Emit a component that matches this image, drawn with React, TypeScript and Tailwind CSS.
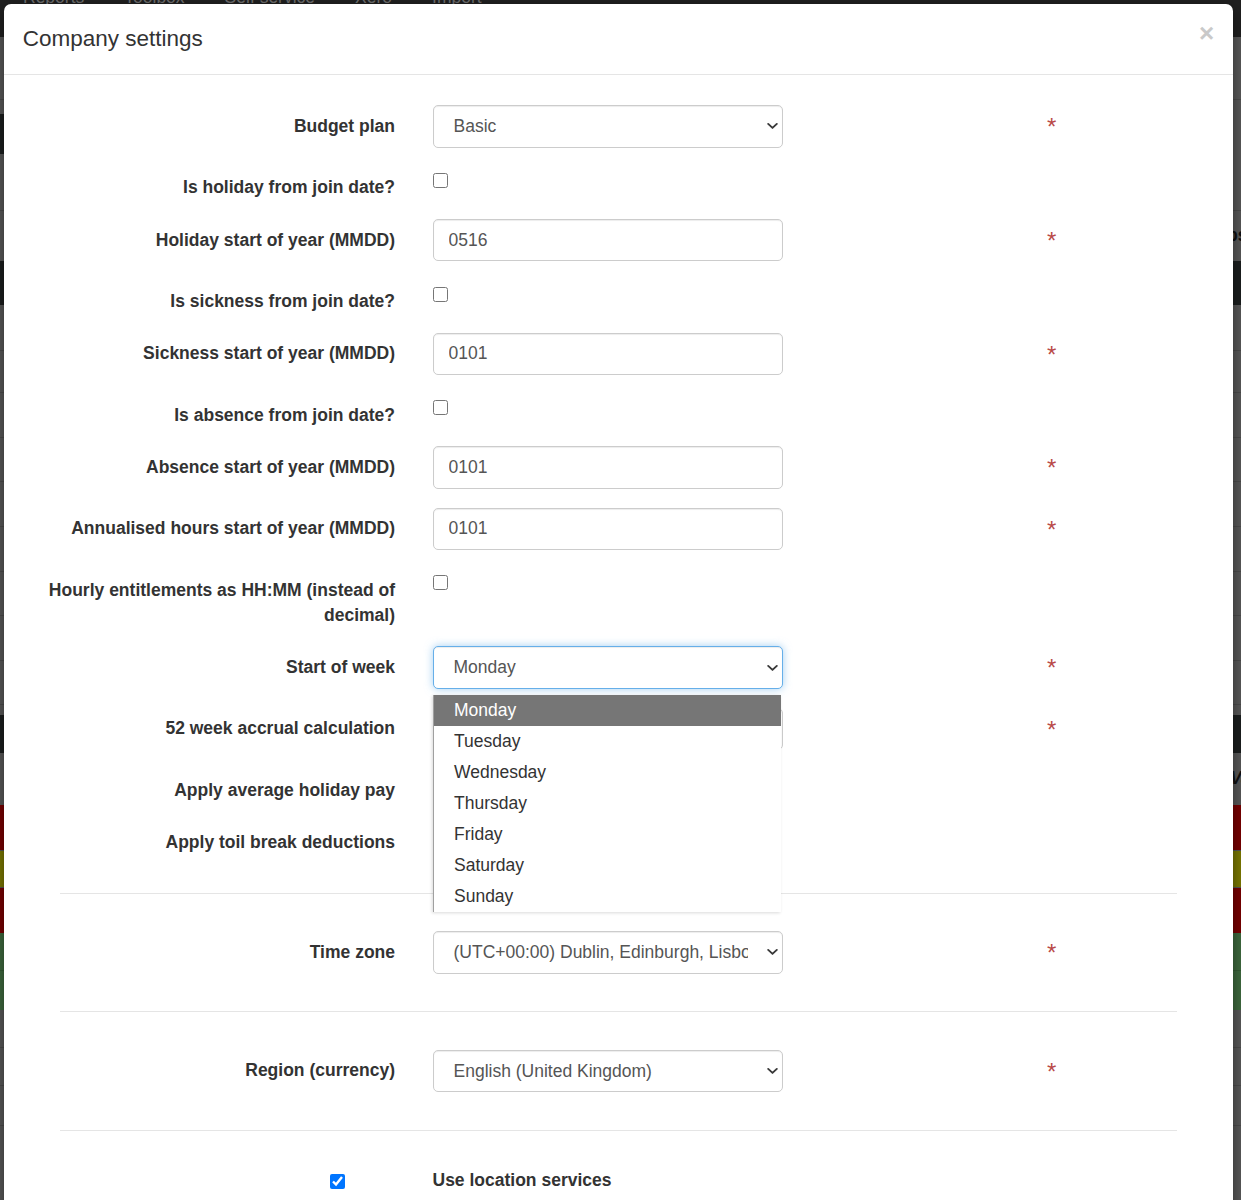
import React from 'react';

const labelCls =
  'w-[409.75px] shrink-0 px-[18.75px] pt-[8.75px] text-right text-[17.5px] font-bold leading-[25px] text-[#333]';
const cellCls = 'relative w-[409.75px] shrink-0 px-[18.75px]';

const Asterisk = () => (
  <span className="ml-[223.5px] pt-[10px] text-[24px] leading-none text-[#b94a48]">*</span>
);

const Chevron = () => (
  <svg
    className="pointer-events-none absolute right-[5px] top-1/2 -translate-y-1/2"
    width="11"
    height="7"
    viewBox="0 0 11 7"
    fill="none"
  >
    <path d="M1.2 1.4l4.3 4 4.3-4" stroke="#3b3b3b" strokeWidth="1.9" strokeLinecap="round" strokeLinejoin="round" />
  </svg>
);

const TextInput = ({ value }: { value: string }) => (
  <input
    readOnly
    value={value}
    className="block h-[42.5px] w-[350px] rounded-[5px] border border-[#ccc] bg-white px-[15px] text-[17.5px] text-[#555] shadow-[inset_0_1px_1px_rgba(0,0,0,0.075)] outline-none"
  />
);

const Select = ({ value, options, focused }: { value: string; options: string[]; focused?: boolean }) => (
  <div className="relative w-[350px]">
    <select
      value={value}
      onChange={() => {}}
      className={
        focused
          ? 'block h-[42.5px] w-full appearance-none rounded-[5px] border border-[#66afe9] bg-white pl-[20px] pr-[34px] text-[17.5px] text-[#555] shadow-[inset_0_1px_1px_rgba(0,0,0,0.075),0_0_8px_rgba(102,175,233,0.6)] outline-none'
          : 'block h-[42.5px] w-full appearance-none rounded-[5px] border border-[#ccc] bg-white pl-[20px] pr-[34px] text-[17.5px] text-[#555] shadow-[inset_0_1px_1px_rgba(0,0,0,0.075)] outline-none'
      }
    >
      {options.map((o) => (
        <option key={o}>{o}</option>
      ))}
    </select>
    <Chevron />
  </div>
);

const FieldRow = ({ label, children, required = true }: { label: string; children: React.ReactNode; required?: boolean }) => (
  <div className="mb-[18.75px] flex">
    <label className={labelCls}>{label}</label>
    <div className={cellCls}>{children}</div>
    {required && <Asterisk />}
  </div>
);

const CheckRow = ({ label }: { label: string }) => (
  <div className="mb-[18.75px] flex">
    <label className={labelCls}>{label}</label>
    <div className={`${cellCls} pt-[6.5px]`}>
      <input type="checkbox" className="m-0 block h-[15px] w-[15px]" />
    </div>
  </div>
);

const days = ['Monday', 'Tuesday', 'Wednesday', 'Thursday', 'Friday', 'Saturday', 'Sunday'];

const WeekDropdown = () => (
  <div className="absolute left-[19.25px] top-[48.75px] z-10 w-[348px] border-l border-[#a0a0a0] bg-white shadow-[-1px_1px_3px_rgba(0,0,0,0.15)]">
    {days.map((d, i) => (
      <div
        key={d}
        className={
          i === 0
            ? 'h-[31px] bg-[#767676] pl-[20px] text-[17.5px] leading-[31px] text-white'
            : 'h-[31px] pl-[20px] text-[17.5px] leading-[31px] text-[#333]'
        }
      >
        {d}
      </div>
    ))}
  </div>
);

const Backdrop = () => (
  <div className="flex h-[1200px] flex-col bg-[#5a5a5a]">
    <div className="flex h-[37px] shrink-0 gap-[40px] bg-[#202020] pl-[23px] text-[17.5px] leading-[25px] text-[#6e6e6e]">
      <span className="-mt-[15.5px]">Reports</span>
      <span className="-mt-[15.5px]">Toolbox</span>
      <span className="-mt-[15.5px]">Self service</span>
      <span className="-mt-[15.5px]">Xero</span>
      <span className="-mt-[15.5px]">Import</span>
    </div>
    <div className="h-[63px] shrink-0 border-b border-[#4d4d4d]" />
    <div className="h-[14px] shrink-0" />
    <div className="flex h-[40px] shrink-0">
      <div className="w-[4px] bg-[#1c1f1f]" />
    </div>
    <div className="h-[57px] shrink-0 border-b border-[#4d4d4d]" />
    <div className="h-[50px] shrink-0 pl-[1227px] pt-[12px] text-[17.5px] font-bold leading-[25px] text-[#111]">ps</div>
    <div className="h-[44px] shrink-0 bg-[#1c1f1f]" />
    {[46, 42, 45, 44, 45, 45, 44, 45, 44].map((h, i) => (
      <div key={i} style={{ height: h }} className="shrink-0 border-b border-[#4d4d4d]" />
    ))}
    <div className="h-[10px] shrink-0" />
    <div className="h-[38px] shrink-0 bg-[#1c1f1f]" />
    <div className="h-[52px] shrink-0 pl-[1230px] pt-[13px] text-[17.5px] font-bold italic leading-[25px] text-[#111]">Va</div>
    <div className="h-[45px] shrink-0 bg-[#7a0000]" />
    <div className="h-[38px] shrink-0 border-y border-[#555] bg-[#7d7a00]" />
    <div className="h-[45px] shrink-0 bg-[#7a0000]" />
    <div className="h-[38px] shrink-0 border-b border-[#355e35] bg-[#3f6b3f]" />
    <div className="h-[39px] shrink-0 bg-[#3f6b3f]" />
    <div className="h-[38px] shrink-0 border-b border-[#4d4d4d]" />
    <div className="h-[38px] shrink-0 border-b border-[#4d4d4d]" />
    <div className="h-[40px] shrink-0 border-b border-[#4d4d4d]" />
  </div>
);

export default function App() {
  return (
    <div className="relative h-[1200px] w-[1241px] overflow-hidden font-['Liberation_Sans',Arial,sans-serif]">
      <Backdrop />

      <div className="absolute left-[4px] top-[4px] w-[1229px] rounded-t-[7px] bg-white shadow-[0_5px_15px_rgba(0,0,0,0.5)]">
        <div className="flex items-start justify-between border-b border-[#e5e5e5] p-[18.75px]">
          <h4 className="text-[22.5px] leading-[32px] text-[#333]">Company settings</h4>
          <button className="-mt-[6px] text-[26px] font-bold leading-[32px] text-[#c9c9c9]">×</button>
        </div>

        <div className="pb-[60px] pt-[30.5px]">
          <FieldRow label="Budget plan">
            <Select value="Basic" options={['Basic', 'Standard', 'Premium']} />
          </FieldRow>
          <CheckRow label="Is holiday from join date?" />
          <FieldRow label="Holiday start of year (MMDD)">
            <TextInput value="0516" />
          </FieldRow>
          <CheckRow label="Is sickness from join date?" />
          <FieldRow label="Sickness start of year (MMDD)">
            <TextInput value="0101" />
          </FieldRow>
          <CheckRow label="Is absence from join date?" />
          <FieldRow label="Absence start of year (MMDD)">
            <TextInput value="0101" />
          </FieldRow>
          <FieldRow label="Annualised hours start of year (MMDD)">
            <TextInput value="0101" />
          </FieldRow>
          <CheckRow label="Hourly entitlements as HH:MM (instead of decimal)" />
          <div className="relative z-10">
            <FieldRow label="Start of week">
              <Select value="Monday" options={days} focused />
              <WeekDropdown />
            </FieldRow>
          </div>
          <FieldRow label="52 week accrual calculation">
            <Select value="Rolling 52 weeks" options={['Rolling 52 weeks']} />
          </FieldRow>
          <CheckRow label="Apply average holiday pay" />
          <CheckRow label="Apply toil break deductions" />

          <hr className="mx-[56px] mt-[37.5px] border-[#e5e5e5]" />

          <div className="pt-[37.5px]">
            <FieldRow label="Time zone">
              <Select
                value="(UTC+00:00) Dublin, Edinburgh, Lisbon, London"
                options={['(UTC+00:00) Dublin, Edinburgh, Lisbon, London']}
              />
            </FieldRow>
          </div>

          <hr className="mx-[56px] mt-[37.5px] border-[#e5e5e5]" />

          <div className="pt-[37.5px]">
            <FieldRow label="Region (currency)">
              <Select value="English (United Kingdom)" options={['English (United Kingdom)']} />
            </FieldRow>
          </div>

          <hr className="mx-[56px] mt-[37.5px] border-[#e5e5e5]" />

          <div className="flex pt-[37.5px]">
            <div className="flex w-[409.75px] shrink-0 justify-end pr-[68.75px] pt-[5.5px]">
              <input type="checkbox" defaultChecked className="m-0 block h-[15px] w-[15px]" />
            </div>
            <div className="px-[18.75px] text-[17.5px] font-bold leading-[25px] text-[#333]">Use location services</div>
          </div>
        </div>
      </div>
    </div>
  );
}
